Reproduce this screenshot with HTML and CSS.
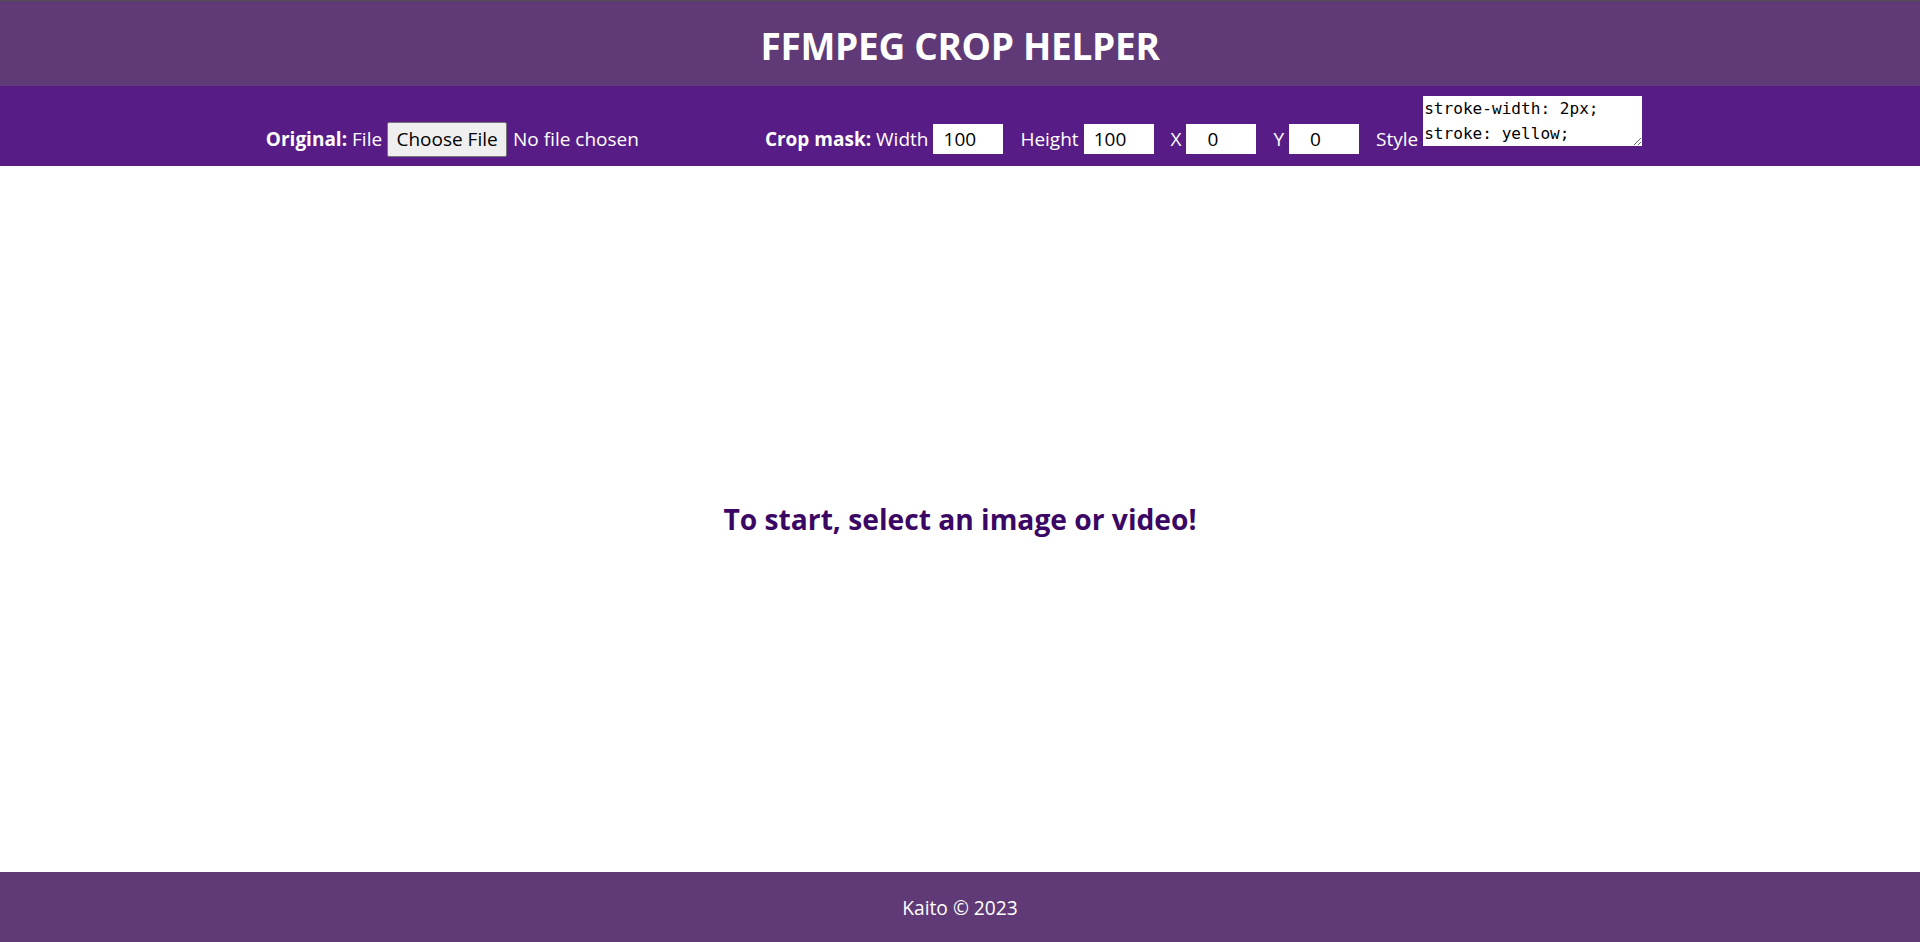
FILE: index.html
```html
<!DOCTYPE html>
<html lang="en">
<head>
<meta charset="utf-8">
<title>FFMPEG Crop Helper</title>
<link rel="stylesheet" href="styles.css">
</head>
<body>
<div class="app">
  <header class="site-header">
    <h1 class="title">FFMPEG CROP HELPER</h1>
  </header>
  <nav class="toolbar">
    <span class="group group-original"><b>Original:</b> File <button class="file-btn" type="button">Choose File</button><span class="file-name">No file chosen</span></span><span class="group group-mask"><b>Crop mask:</b> <span class="field">Width <input class="num" type="text" value="100"></span><span class="field">Height <input class="num" type="text" value="100"></span><span class="field">X <input class="num" type="text" value="0"></span><span class="field">Y <input class="num" type="text" value="0"></span><span class="field last">Style <textarea class="style-box" spellcheck="false">stroke-width: 2px;
stroke: yellow;</textarea></span></span>
  </nav>
  <main class="stage">
    <h2 class="hint">To start, select an image or video!</h2>
  </main>
  <footer class="site-footer">Kaito © 2023</footer>
</div>
</body>
</html>
```
FILE: styles.css
```css
* { box-sizing: border-box; }
html, body { margin: 0; padding: 0; }
body {
  font-family: "Open Sans", "Noto Sans", sans-serif;
  font-size: 19px;
  color: #fff;
  background: #fff;
}
.app {
  display: flex;
  flex-direction: column;
  min-height: 100vh;
}
.site-header {
  height: 86px;
  border-top: 1px solid #4f4f4f;
  background: #603a76;
  display: flex;
  align-items: center;
  justify-content: center;
  padding-top: 3px;
}
.title {
  margin: 0;
  font-size: 37px;
  font-weight: 700;
  letter-spacing: -0.3px;
  color: #fff;
  line-height: 1;
}
.toolbar {
  height: 80px;
  background: #581c87;
  padding-top: 10px;
  text-align: center;
  line-height: 26px;
  white-space: nowrap;
  padding-right: 12px;
}
.toolbar b { font-weight: 700; }
.group-original { margin-right: 126px; }
.file-btn {
  font-family: inherit;
  font-size: 19px;
  color: #000;
  background: #efefef;
  border: 1px solid #767676;
  border-radius: 2px;
  height: 35px;
  width: 120px;
  padding: 0;
  margin-right: 6px;
  vertical-align: baseline;
}
.field { margin-right: 17px; }
.field.last { margin-right: 0; }
.num {
  font-family: inherit;
  font-size: 19px;
  color: #000;
  background: #fff;
  border: none;
  outline: none;
  width: 70px;
  height: 30px;
  padding: 0 17px 0 0;
  text-align: center;
  vertical-align: baseline;
}
.style-box {
  font-family: "DejaVu Sans Mono", "Liberation Mono", monospace;
  font-size: 16.1px;
  line-height: 25px;
  color: #000;
  background: #fff;
  border: none;
  outline: none;
  width: 219px;
  height: 50px;
  padding: 0 1px;
  overflow: hidden;
  resize: both;
  vertical-align: baseline;
}
.stage {
  flex: 1;
  display: flex;
  align-items: center;
  justify-content: center;
}
.hint {
  margin: 0;
  font-size: 28.2px;
  font-weight: 700;
  color: #3b0764;
}
.site-footer {
  height: 70px;
  background: #603a76;
  color: #fff;
  display: flex;
  align-items: center;
  justify-content: center;
  font-size: 19.2px;
}
```
